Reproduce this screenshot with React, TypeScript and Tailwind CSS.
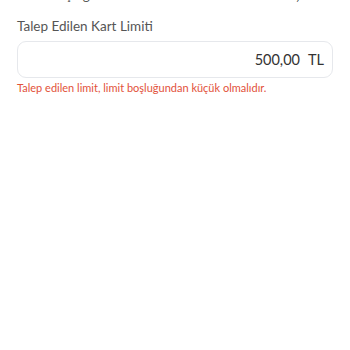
export default function App() {
  return (
    <div className="h-[350px] w-[350px] overflow-hidden bg-white" style={{ fontFamily: 'Lato, "Noto Sans", sans-serif' }}>
      <div className="-mt-[14px] px-[17px]">
        <div className="flex items-center justify-between text-[13.5px] leading-[18px]">
          <span className="text-[#555]">Limit Boşluğu</span>
          <span className="font-bold text-[#222]">100,00 TL</span>
        </div>
        <div className="mt-[13px] text-[13.5px] leading-[18px] text-[#555]">Talep Edilen Kart Limiti</div>
        <div className="mt-[6px] flex h-[37px] items-center justify-end rounded-[9px] border border-[#e6e8ec] px-[8px] text-[14.5px] text-[#333]">
          <span>500,00</span>
          <span className="ml-[8px]">TL</span>
        </div>
        <div className="mt-[2px] text-[11px] leading-[16px] text-[#e2513a]">Talep edilen limit, limit boşluğundan küçük olmalıdır.</div>
      </div>
    </div>
  )
}
